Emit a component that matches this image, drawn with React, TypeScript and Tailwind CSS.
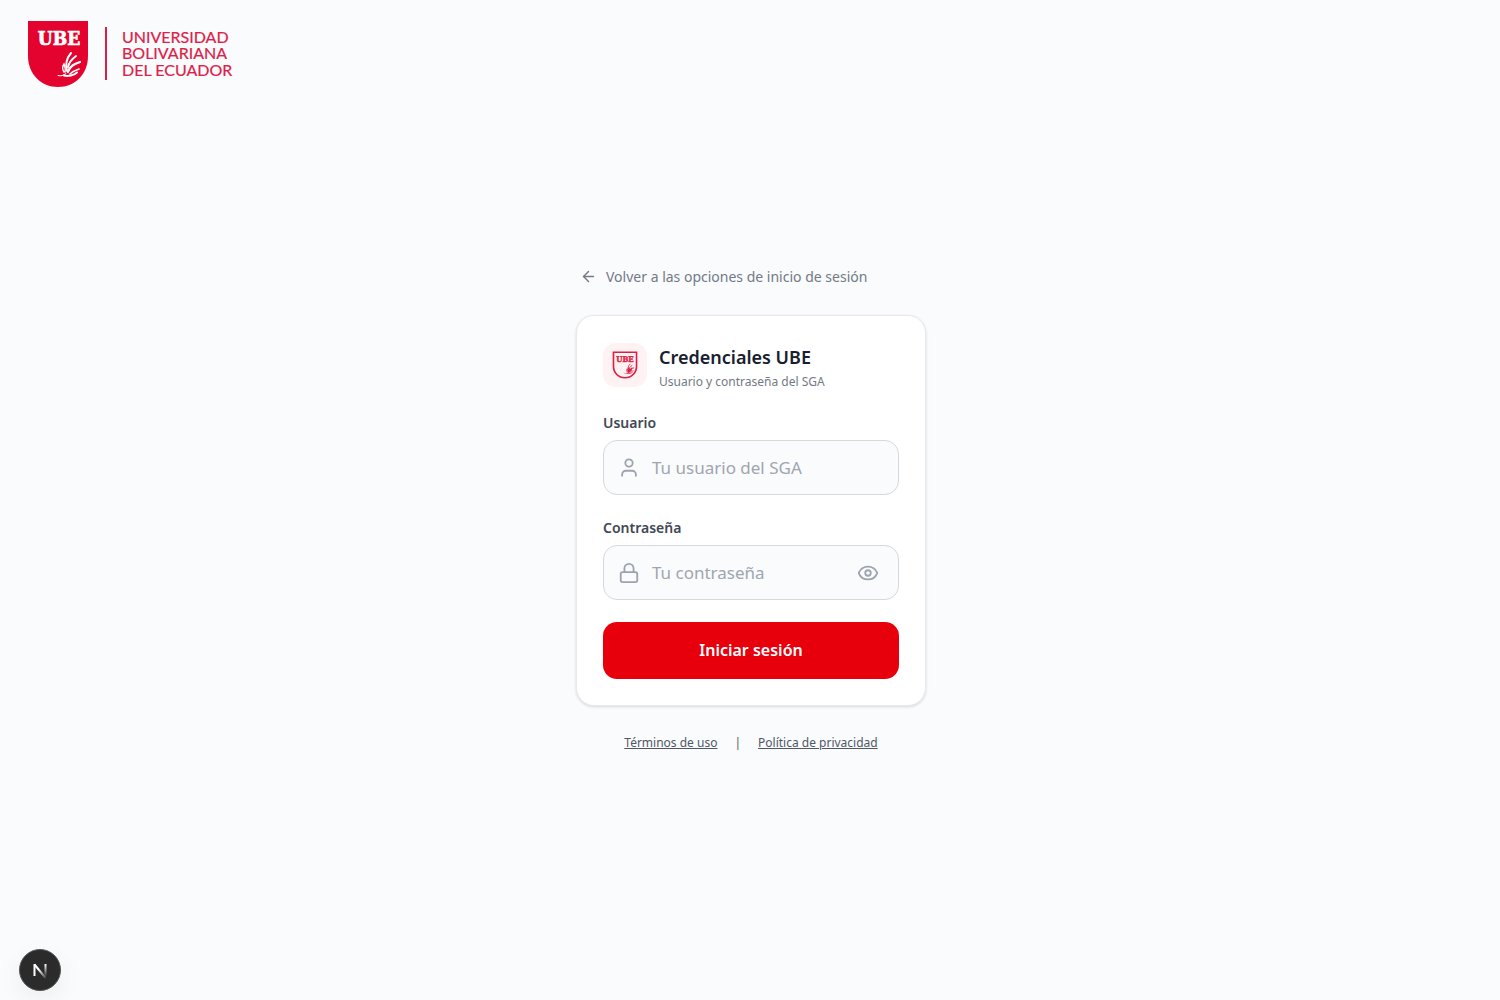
import { useState } from "react";
import { ArrowLeft, Eye, EyeOff, Lock } from "lucide-react";

function Branch() {
  return (
    <g fill="none" stroke="currentColor" strokeLinecap="round">
      <path d="M30 54.500c3 1 5 0 8-2" strokeWidth="1" />
      <path d="M36 54.500c4 1 10 0 13-3" strokeWidth="2" />
      <path d="M36 51c-2-3-2-5 0-8 1 3 2 5 1 8" strokeWidth="1.400" />
      <path d="M39 50c-2-7-1-12 4-18" strokeWidth="2" />
      <path d="M40 46c1-5 4-8 8-11" strokeWidth="2" />
      <path d="M40 51c2-6 6-8 12-10" strokeWidth="2.200" />
      <path d="M42 53c3-3 6-4 9-5" strokeWidth="1.600" />
    </g>
  );
}

function BrandLogo() {
  return (
    <svg
      className="block h-[66px] w-[206px]"
      viewBox="0 0 206 66"
      role="img"
      aria-label="Universidad Bolivariana del Ecuador"
    >
      <path d="M0 0h60v35c0 18-13 31-30 31S0 53 0 35z" fill="#e4032e" />
      <g className="text-white">
        <Branch />
      </g>
      <text x="31" y="24" textAnchor="middle" fill="#fff" stroke="#fff" strokeWidth="0.700" fontSize="19" fontWeight="700" fontFamily="'DejaVu Serif Condensed', 'DejaVu Serif', serif">
        UBE
      </text>
      <path d="M77 6h2v53h-2z" fill="#d81f48" />
      <g fill="#dc2149" stroke="#dc2149" strokeWidth="0.200" fontSize="16" fontFamily="Lato, sans-serif">
        <text x="94" y="22">UNIVERSIDAD</text>
        <text x="94" y="38">BOLIVARIANA</text>
        <text x="94" y="55">DEL ECUADOR</text>
      </g>
    </svg>
  );
}

function ShieldMark() {
  return (
    <svg className="h-7 w-[26px] text-[#dc1f46]" viewBox="0 0 62 68" aria-hidden="true">
      <path d="M3 3h56v34c0 16-12 28-28 28S3 53 3 37z" fill="none" stroke="currentColor" strokeWidth="4" />
      <g strokeWidth="3">
        <Branch />
      </g>
      <text x="31" y="27" textAnchor="middle" fill="currentColor" stroke="currentColor" fontSize="19" fontWeight="700" fontFamily="'DejaVu Serif Condensed', 'DejaVu Serif', serif">
        UBE
      </text>
      <path d="M39 54l-2-8 3-8 3 6 6-5-2 9z" fill="currentColor" />
    </svg>
  );
}

function PersonIcon() {
  return (
    <svg
      className="absolute top-[17px] left-[15px] size-[22px] text-[#9ca3af]"
      viewBox="0 0 24 24"
      fill="none"
      stroke="currentColor"
      strokeWidth="2"
      strokeLinecap="round"
      strokeLinejoin="round"
      aria-hidden="true"
    >
      <circle cx="12" cy="6.500" r="4" />
      <path d="M4.500 20.500v-1.500a4 4 0 0 1 4-4h7a4 4 0 0 1 4 4v1.500" />
    </svg>
  );
}

const inputClass =
  "h-[55px] w-full rounded-[14px] border border-[#d5d8dd] bg-[#fafbfd] pl-12 text-[17px] text-gray-900 placeholder:text-[#a0a5af] outline-none focus:border-red-500";

export default function App() {
  const [visible, setVisible] = useState(false);

  return (
    <div className="flex min-h-screen flex-col bg-[#f9fbfd] font-['Noto_Sans',sans-serif]">
      <header className="px-7 pt-[21px]">
        <BrandLogo />
      </header>

      <main className="flex flex-1 flex-col items-center justify-center pr-4 pb-[68px] pl-[18px]">
        <div className="w-full max-w-[350px]">
          <button type="button" className="ml-1 flex items-center gap-[9px] text-[14px] leading-5 text-[#737985]">
            <ArrowLeft size={17} aria-hidden="true" />
            Volver a las opciones de inicio de sesión
          </button>

          <section className="mt-7 rounded-[18px] border border-[#e7e9ed] bg-white px-[26px] pt-[27px] pb-[26px] shadow-[0_1px_3px_rgba(0,0,0,0.14)]">
            <div className="flex items-start gap-3">
              <div className="flex size-11 items-center justify-center rounded-[13px] bg-[#fef2f2]">
                <ShieldMark />
              </div>
              <div>
                <h1 className="text-[18px] leading-7 font-semibold text-[#18202f]">Credenciales UBE</h1>
                <p className="text-[12px] leading-[22px] text-[#737985]">Usuario y contraseña del SGA</p>
              </div>
            </div>

            <form className="mt-5" onSubmit={(e) => e.preventDefault()}>
              <label htmlFor="user" className="block text-[14px] leading-5 font-semibold text-[#414855]">
                Usuario
              </label>
              <div className="relative mt-[7px]">
                <PersonIcon />
                <input id="user" type="text" placeholder="Tu usuario del SGA" className={inputClass} />
              </div>

              <label htmlFor="password" className="mt-[23px] block text-[14px] leading-5 font-semibold text-[#414855]">
                Contraseña
              </label>
              <div className="relative mt-[7px]">
                <Lock size={22} className="absolute top-[17px] left-[15px] text-[#9ca3af]" aria-hidden="true" />
                <input id="password" type={visible ? "text" : "password"} placeholder="Tu contraseña" className={inputClass} />
                <button
                  type="button"
                  aria-label="Mostrar contraseña"
                  onClick={() => setVisible(!visible)}
                  className="absolute top-[17px] right-5 text-[#9ca3af]"
                >
                  {visible ? <EyeOff size={22} /> : <Eye size={22} />}
                </button>
              </div>

              <button type="submit" className="mt-[22px] h-[57px] w-full rounded-[14px] bg-[#e7000b] text-[16px] font-semibold text-white">
                Iniciar sesión
              </button>
            </form>
          </section>

          <nav className="mt-[27px] flex items-center justify-center gap-[17px] text-[12px] leading-5 text-[#4f5764]">
            <a href="#terminos" className="underline">Términos de uso</a>
            <span>|</span>
            <a href="#privacidad" className="underline">Política de privacidad</a>
          </nav>
        </div>
      </main>

      <button
        type="button"
        aria-label="Next.js"
        className="fixed bottom-[9px] left-[19px] flex size-[42px] items-center justify-center rounded-full border border-[#555] bg-[#2b2b2b] shadow-[0_8px_24px_rgba(0,0,0,0.06)]"
      >
        <svg className="size-[42px] shrink-0" viewBox="0 0 42 42" fill="none" aria-hidden="true">
          <defs>
            <linearGradient id="diag" x1="20" y1="20" x2="28" y2="30" gradientUnits="userSpaceOnUse">
              <stop stopColor="#fff" />
              <stop offset="1" stopColor="#fff" stopOpacity="0" />
            </linearGradient>
            <linearGradient id="stem" x1="26" y1="15" x2="26" y2="28" gradientUnits="userSpaceOnUse">
              <stop stopColor="#fff" />
              <stop offset="1" stopColor="#fff" stopOpacity="0" />
            </linearGradient>
          </defs>
          <path d="M15.500 15.500L26.500 29" stroke="url(#diag)" strokeWidth="2" />
          <path d="M15.500 27V15" stroke="#fff" strokeWidth="2" />
          <path d="M26.500 15v12" stroke="url(#stem)" strokeWidth="2" />
        </svg>
      </button>
    </div>
  );
}
